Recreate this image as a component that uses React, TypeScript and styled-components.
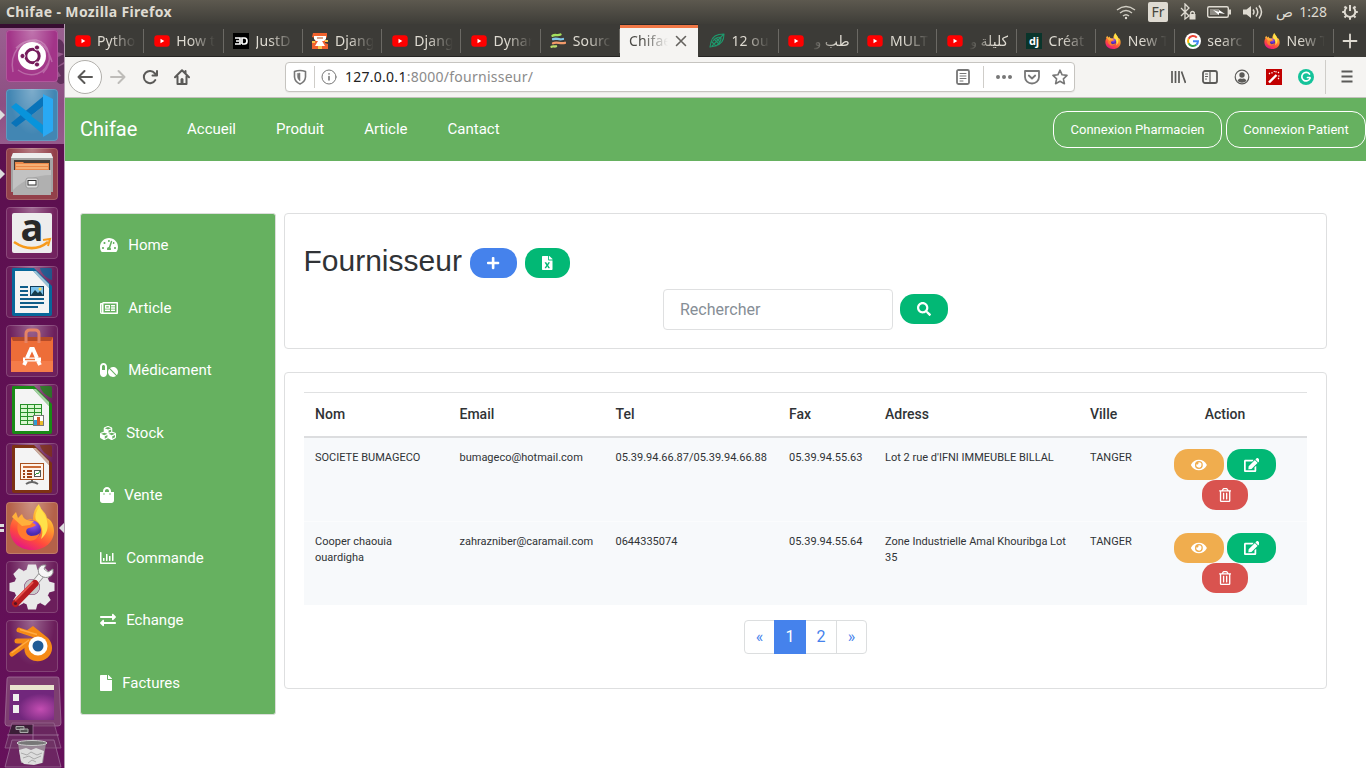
import React from 'react';
import styled, { createGlobalStyle, css } from 'styled-components';
import {
  FaTachometerAlt, FaRegNewspaper, FaPills, FaCubes, FaShoppingBag, FaRegChartBar, FaExchangeAlt,
  FaFile, FaPlus, FaFileExcel, FaSearch, FaEye, FaEdit, FaRegTrashAlt,
} from 'react-icons/fa';

const GlobalStyle = createGlobalStyle`
  * { box-sizing: border-box; }
  html, body { margin: 0; padding: 0; background: #fff; overflow: hidden; }
  svg { display: block; flex: none; }
`;

const ui = `'Noto Sans', 'DejaVu Sans', sans-serif`;
const roboto = `Roboto, sans-serif`;
const green = '#66b160';

const Screen = styled.div`
  width: 1366px; height: 768px; display: flex; flex-direction: column;
  overflow: hidden; font-family: ${roboto}; color: #303336;
`;
const TopPanel = styled.header`
  height: 24px; flex: none; display: flex; align-items: center; justify-content: space-between;
  padding: 0 8px 0 6px; background: linear-gradient(#5d594f, #3e3d38);
  color: #dfdbd2; font-family: ${ui};
`;
const WindowTitle = styled.div`font-size: 14px; font-weight: 700; letter-spacing: 0.35px; line-height: 22px;`;
const Indicators = styled.div`display: flex; align-items: center; height: 24px;`;
const Layout = styled.span<{ $ml: number }>`
  margin-left: ${p => p.$ml}px; width: 20px; height: 20px; border-radius: 2px; background: #dfdbd2;
  color: #45443d; font-size: 14px; line-height: 20px; text-align: center;
`;
const Slot = styled.span<{ $ml: number }>`display: flex; margin-left: ${p => p.$ml}px;`;
const Clock = styled.span`
  margin-left: 13px; width: 51px; display: flex; justify-content: space-between; font-size: 14px;
  line-height: 24px; letter-spacing: 0;
`;
const Desk = styled.div`display: flex; flex: 1; min-height: 0;`;

const Dock = styled.aside`
  position: relative; width: 65px; flex: none; padding: 6px 0 0 6px; display: flex; flex-direction: column; gap: 7px;
  border-right: 1px solid #b69fb3;
  background: linear-gradient(#370d31 0 4px, #9a6090 4px, #8d4f83 80px, #955b8c 120px, #5c104f 120px, #65105a 100%);
`;
const Tile = styled.div<{ $bg: string }>`
  position: relative; width: 52px; height: 52px; border-radius: 4px; flex: none;
  background: radial-gradient(ellipse at 50% 0, rgba(255,255,255,.32), rgba(255,255,255,0) 62%), ${p => p.$bg};
  box-shadow: inset 0 0 0 1px rgba(255,255,255,.17);
`;
const Pip = styled.span<{ $right?: boolean }>`
  position: absolute; top: 21px; border: 5px solid transparent;
  ${p => p.$right ? css`right: -6px; border-right-color: #ddd; border-left: 0;` : css`left: -6px; border-left-color: #ddd; border-right: 0;`}
`;
const DoublePip = styled.span`
  position: absolute; left: -6px; top: 22px; width: 4px; height: 8px;
  border-top: 3px solid #ddd; border-bottom: 3px solid #ddd;
`;
const Ghost = styled.svg`position: absolute; left: 54px; top: 14px;`;
const Stack = styled.svg`margin-left: -2px; margin-top: -4px;`;

const Browser = styled.div`flex: 1; min-width: 0; display: flex; flex-direction: column;`;
const Tabs = styled.div`
  height: 33px; flex: none; display: flex; background: #3c3b37; font-family: ${ui}; color: #dfdbd2;
`;
const TabBox = styled.div<{ $active?: boolean }>`
  position: relative; width: 79.3px; flex: none; display: flex; align-items: center; padding: 1px 0 0 9.5px; gap: 6.5px;
  border-bottom: 1px solid #252422; font-size: 14px;
  &::after { content: ''; position: absolute; right: 0; top: 5px; width: 1px; height: 24px; background: #6b6964; }
  ${p => p.$active && css`
    width: 78.3px; margin-right: 1px;
    background: #f5f4f2; color: #4a4945; border-bottom-color: #f5f4f2; box-shadow: inset 0 3px #f07746;
    padding-left: 9px; gap: 4.5px;
    border-top: 1px solid #2b2a28;
    &::after { display: none; }
  `}
`;
const TabText = styled.span<{ $rtl?: boolean }>`
  width: 39px; overflow: hidden; white-space: nowrap; line-height: 22px; letter-spacing: 0.1px;
  direction: ${p => p.$rtl ? 'rtl' : 'ltr'};
  mask-image: linear-gradient(${p => p.$rtl ? 'to left' : 'to right'}, #000 35%, transparent 100%);
`;
const NewTab = styled.div`flex: 1; display: flex; align-items: center; justify-content: center;`;

const Toolbar = styled.div`
  height: 41px; flex: none; display: flex; align-items: center; padding: 0 11px 1px 3px;
  background: #f5f4f2; border-bottom: 1px solid #c3c1bc;
`;
const Back = styled.div`
  width: 34px; height: 34px; border-radius: 50%; border: 1px solid #b1afab; background: #fff;
  display: flex; align-items: center; justify-content: center;
`;
const IconRow = styled.div<{ $ml: number }>`display: flex; gap: 16px; margin-left: ${p => p.$ml}px;`;
const UrlBar = styled.div`
  width: 790px; height: 30px; margin: 0 0 0 95px; flex: none; display: flex; align-items: center;
  border: 1px solid #c6c4c0; border-radius: 4px; background: #fff; padding: 0 6px; box-shadow: 0 1px 1px rgba(0,0,0,.05);
`;
const Divider = styled.i<{ $h: number; $ml: number; $mr: number }>`
  width: 1px; height: ${p => p.$h}px; background: #cfcdc9; margin: 0 ${p => p.$mr}px 0 ${p => p.$ml}px;
`;
const Url = styled.div`
  flex: 1; margin-left: 8px; padding-top: 1px; font-family: ${ui}; font-size: 14px; color: #8b8b8b; line-height: 24px; letter-spacing: 0.26px;
  b { font-weight: 400; color: #222; }
`;

const Page = styled.main`flex: 1; background: #fff; min-height: 0;`;
const Navbar = styled.nav`
  height: 63px; background: ${green}; display: flex; align-items: center; padding-left: 15px; color: #fff;
`;
const Brand = styled.span`font-size: 20px; width: 107px; padding-bottom: 2px;`;
const Links = styled.div`display: flex; gap: 40px; font-size: 15px; flex: 1; padding-bottom: 2px;`;
const Outline = styled.button<{ $w: number }>`
  width: ${p => p.$w}px; height: 37px; padding: 0; margin-left: 4px; border: 1px solid #fff; border-radius: 14px;
  background: transparent; color: #fff; font: 400 13px ${roboto}; white-space: nowrap;
`;
const Content = styled.div`display: flex; gap: 8px; padding: 52px 0 0 15px; align-items: flex-start;`;
const Side = styled.aside`
  width: 196px; height: 502px; border: 1px solid #dcdedb; border-radius: 3px; background: ${green};
  padding: 0 0 0 19.3px; color: #fff;
`;
const SideItem = styled.div`
  height: 62.5px; display: flex; align-items: center; gap: 9.9px; font-size: 15px; line-height: 20px;
`;
const Glyph = styled.span<{ $w: number; $s: number }>`
  display: flex;
  svg { width: ${p => p.$w}px; height: ${p => p.$s}px; }
`;
const Cards = styled.div`display: flex; flex-direction: column; gap: 23px;`;
const Card = styled.section<{ $h: number }>`
  width: 1043px; height: ${p => p.$h}px; border: 1px solid #dedfe0; border-radius: 4px; padding: 0 19px; background: #fff;
`;
const Heading = styled.div`display: flex; align-items: center; height: 45px; margin: 26px 0 0 -0.5px;`;
const Title = styled.h1`
  margin: 0 8px 0 0; padding-bottom: 4px; font: 400 30px/36px 'Liberation Sans', sans-serif; color: #303336;
`;
const Pill = styled.button<{ $w: number; $c: string; $ml?: number; $h?: number }>`
  width: ${p => p.$w}px; height: ${p => p.$h ?? 30}px; margin: 0 0 0 ${p => p.$ml ?? 0}px; padding: 0; border: 0;
  border-radius: 14px; background: ${p => p.$c}; color: #fff; display: flex; align-items: center; justify-content: center;
`;
const SearchRow = styled.div`
  display: flex; align-items: flex-start; justify-content: center; margin-top: 4px; gap: 7px;
  ${Pill} { margin-top: 5px; }
`;
const Input = styled.input`
  width: 230px; height: 41px; border: 1px solid #dfe0e1; border-radius: 4px; padding: 0 16px; background: #fff;
  font: 400 16px ${roboto}; outline: 0;
  &::placeholder { color: #868e96; opacity: 1; }
`;
const Table = styled.table`
  width: 1003px; margin-top: 19px; table-layout: fixed; border-collapse: separate; border-spacing: 0; text-align: left;
`;
const Th = styled.th`
  height: 46px; padding: 0 11px 2px; font-size: 14px; font-weight: 500; border-top: 1px solid #e0e1e2; border-bottom: 2px solid #dcdddf;
  &:last-child { text-align: center; }
`;
const Td = styled.td<{ $line?: boolean }>`
  height: ${p => p.$line ? 84 : 83}px; padding: 12px 11px 0; vertical-align: top; background: #f7f9fb; font-size: 11px; line-height: 16px;
  border-bottom: 1px solid ${p => p.$line ? '#fbfcfd' : '#f7f9fb'};
`;
const Actions = styled.div`
  display: flex; flex-wrap: wrap; justify-content: center; gap: 0 3px; width: 110px; margin: -1px auto 0;
`;
const Pager = styled.div`
  display: flex; width: 123px; height: 34px; margin: 15px auto 0; border: 1px solid #dcdedf; border-radius: 4px;
`;
const PageLink = styled.span<{ $on?: boolean }>`
  flex: 0 0 30px; height: 32px; text-align: center; font-size: 16px; line-height: 32px; color: #4582ec;
  &:first-child { flex-basis: 29px; }
  &:last-child { border-left: 1px solid #dcdedf; }
  ${p => p.$on && css`background: #4582ec; color: #fff; flex-basis: 32px; height: 34px; margin-top: -1px; line-height: 34px;`}
`;

const Ico = ({ children, c = '#5b5a58', s = 16 }: { children: React.ReactNode; c?: string; s?: number }) => (
  <svg width={s} height={s} viewBox="0 0 16 16" fill="none" stroke={c} strokeWidth="2" strokeLinecap="round" strokeLinejoin="round">{children}</svg>
);

const YouTube = () => <svg width="16" height="16" viewBox="0 0 16 16"><rect x=".3" y="2.3" width="15.4" height="11.4" rx="3" fill="#f00" /><path d="M6.5 5.8v4.4L10.3 8z" fill="#fff" /></svg>;
const FoxMark = ({ size = 16 }: { size?: number }) => (
  <svg width={size} height={size} viewBox="0 0 46 46">
    <defs>
      <linearGradient id="foxBody" x1=".8" y1="0" x2=".3" y2="1"><stop stopColor="#fff044" /><stop offset=".4" stopColor="#ff9a2d" /><stop offset=".72" stopColor="#ff4a3d" /><stop offset="1" stopColor="#e31587" /></linearGradient>
      <radialGradient id="foxCore" cx=".6" cy=".2"><stop stopColor="#a05bff" /><stop offset="1" stopColor="#4b2bb0" /></radialGradient>
    </defs>
    <path d="M30 0c1 6 7 8 8 14 5 2 7 8 7 13 0 11-9 19-22 19S1 37 1 26c0-6 2-10 5-14l2 5 4-6c1 3 2 4 5 5 4-1 6-1 7 0 0-7 2-12 6-16z" fill="url(#foxBody)" />
    <path d="M31 2c1 6 6 8 7 15 2 8-1 14-6 18 3-8 1-14-5-19-2-5 1-10 4-14z" fill="#ffe14a" />
    <circle cx="22" cy="26" r="10" fill="url(#foxCore)" />
    <path d="M9 19c5-3 9-3 15 0l3 2c-3 3-7 2-9 4-2 3 0 6 4 7 4 0 7-1 9-3-2 7-8 9-14 7-7-2-10-9-8-17z" fill="#ff7a2e" />
    <path d="M3 13c1-2 3-4 4-5l2 6 4-4c1 3 2 5 5 6l7 1-4 4-8 1z" fill="#ffb03c" />
  </svg>
);
const FaviconBox = styled.span<{ $bg: string; $size: number }>`
  width: 16px; height: 16px; flex: none; background: ${p => p.$bg}; color: #fff; text-align: center;
  font: 700 ${p => p.$size}px/15px 'Open Sans', sans-serif;
`;
const JustDjango = () => (
  <svg width="16" height="16" viewBox="0 0 16 16"><path d="M0 0h16v16H0z" /><path d="M2 5h5v6H2M3 8h3M9 11V5h2.500q2.500 0 2.500 3t-2.500 3H9" fill="none" stroke="#fff" strokeWidth="1.700" /></svg>
);
const Robot = () => (
  <svg width="16" height="16" viewBox="0 0 16 16"><path d="M1 0h14v4l-2 2v4l3 1v5H0v-6l3-1V5L0 4z" fill="#f1622d" /><path d="M2 3h12v3l-2 2H4L2 6zM6 8h4l3 5H3z" fill="#fff" /><path d="M5 4h6v2H5z" fill="#d9a58e" /><path d="M0 8h3v2H0zM13 7h3v2h-3zM6 13h4v3H6z" fill="#f9c64b" /></svg>
);
const Waves = () => (
  <svg width="16" height="16" viewBox="0 0 16 16" fill="none" strokeWidth="2.300" strokeLinecap="round"><path d="M2.500 2.800c3-2 5 .5 8-1.300" stroke="#a5e05e" /><path d="M3 6.200c4-1.500 5 1 10-.2" stroke="#82c7e8" /><path d="M3 10.200c4-2 7 1 12-.4" stroke="#f39a6a" /><path d="M1.500 13.700c2-1 3 .3 4.500-.4" stroke="#b9dc6a" /></svg>
);
const Rocket = () => <Ico c="#1e9a6d"><path strokeWidth="1.1" d="M15 1C8 1 3 4 2 9l-1 5 5-1c5-1 9-5 9-12zM3 13L14 2M4 8c2-3 5-4 8-4M8 12c3-2 4-4 4-7M5 6l5 5M7 5l4 4M3 9l4 4" /></Ico>;
const Google = () => (
  <svg width="16" height="16" viewBox="0 0 16 16" fill="none" strokeWidth="2"><circle cx="8" cy="8" r="8" fill="#fff" /><path d="M11.800 4.600A5 5 0 003.600 5.700" stroke="#ea4335" /><path d="M3.600 5.700a5 5 0 000 4.600" stroke="#fbbc05" /><path d="M3.600 10.300a5 5 0 007.700 1.500" stroke="#34a853" /><path d="M11.300 11.800a5 5 0 001.700-3.600H8" stroke="#4285f4" /></svg>
);

type TabInfo = { icon?: React.ReactNode; text: string; active?: boolean; rtl?: boolean };
const tabs: TabInfo[] = [
  { icon: <YouTube />, text: 'Pytho' },
  { icon: <YouTube />, text: 'How t' },
  { icon: <JustDjango />, text: 'JustD' },
  { icon: <Robot />, text: 'Djang' },
  { icon: <YouTube />, text: 'Djang' },
  { icon: <YouTube />, text: 'Dynar' },
  { icon: <Waves />, text: 'Sourc' },
  { text: 'Chifae', active: true },
  { icon: <Rocket />, text: '12 ou' },
  { icon: <YouTube />, text: 'طب و', rtl: true },
  { icon: <YouTube />, text: 'MULT' },
  { icon: <YouTube />, text: 'كليلة و', rtl: true },
  { icon: <FaviconBox $bg="#09352b" $size={11}>dj</FaviconBox>, text: 'Créat' },
  { icon: <FoxMark />, text: 'New T' },
  { icon: <Google />, text: 'searc' },
  { icon: <FoxMark />, text: 'New T' },
];

const tile = { width: 52, height: 52, viewBox: '0 0 52 52' };
const DocTile = ({ c, children }: { c: string; children: React.ReactNode }) => (
  <svg {...tile}>
    <path d="M7 2h21l18 18v28q0 2-2 2H8q-2 0-2-2V4q0-2 1-2z" fill={c} />
    <path d="M9 5h18l16 17v25H9z" fill="#f4f4f4" /><path d="M27 5l16 17v-4L30 5z" fill="#fff" opacity=".6" />
    <path d="M34 2h10q2 0 2 2v10c-4-1-11-6-12-12z" fill={c} opacity=".75" />{children}
  </svg>
);
const Teeth = () => (
  <g fill="#e9e9e9">{[0, 45, 90, 135, 180, 225, 270, 315].map(a => <path key={a} d="M20.500 9l1.500-5.500h8L31.500 9z" transform={`rotate(${a} 26 26)`} />)}</g>
);
const dock: { bg: string; art: React.ReactNode; marks?: React.ReactNode }[] = [
  { bg: '#a23488', art: <svg {...tile}>
    <g fill="none" stroke="#fff" opacity=".26"><path d="M7 42C3 22 16 9 30 10c14 3 18 22 7 33M10 18c12-12 30-9 36 14M44 28C40 45 25 49 12 40" strokeWidth="1.500" /></g>
    <circle cx="26" cy="26" r="14" fill="#fff" /><circle cx="26.500" cy="26" r="6.700" fill="none" stroke="#751b5b" strokeWidth="3" />
    <g fill="#751b5b" stroke="#fff" strokeWidth="1"><circle cx="16.500" cy="26" r="2.600" /><circle cx="31" cy="17.500" r="2.600" /><circle cx="31" cy="34.500" r="2.600" /></g></svg> },
  { bg: '#4286b3', marks: <Pip />, art: <svg {...tile}>
    <path d="M5 34l5 4 29-22V6z" fill="#0873b9" /><path d="M5 18l5-4 29 22v11z" fill="#0894db" /><path d="M37 5l10 5v32l-10 6z" fill="#29a9f4" /><path d="M37 17L25 27l12 9z" fill="#4286b3" /></svg> },
  { bg: '#93404a', marks: <Pip />, art: <svg {...tile}>
    <path d="M7 5h38l2 5v34H5V10z" fill="#a5a5a5" /><path d="M7 5h38l2 5H5z" fill="#eee" /><path d="M8 12h36v10H8z" fill="#433c36" /><path d="M9 14h8l1 1h25v9H9z" fill="#eb8849" /><path d="M10 17h32M10 20h32" stroke="#ffd7a0" />
    <path d="M7 22h38v25H7z" fill="#b0b0b0" /><path d="M7 22h38v5C30 27 17 32 7 42z" fill="#c2c2c2" /><rect x="20" y="30" width="12" height="10" rx="2" fill="#ddd" stroke="#999" /><rect x="22" y="32.500" width="8" height="4.500" fill="#fff" stroke="#333" /></svg> },
  { bg: '#72235f', art: <svg {...tile}><rect x="6" y="6" width="40" height="40" rx="2" fill="#ededed" />
    <text x="26" y="33.500" textAnchor="middle" fontFamily="Open Sans" fontWeight="700" fontSize="38" fill="#292929">a</text>
    <path d="M8 35c12 8 24 8 34 0" fill="none" stroke="#f79a1c" strokeWidth="2.600" /><path d="M37 33l7-1-2 7" fill="none" stroke="#f79a1c" strokeWidth="2" /></svg> },
  { bg: '#6b1e5b', art: <DocTile c="#08679a"><g stroke="#105d89" strokeWidth="2"><path d="M14 21h8M14 25h8M14 29h8M14 33h24M14 37h24M14 41h18" /></g><rect x="24.500" y="20.500" width="13" height="9" fill="#7cc3ec" stroke="#123e5c" /><path d="M25 29l4-5 3 3 2-2 3 4z" fill="#153c4a" /><circle cx="34" cy="23" r="1.500" fill="#ffd94a" /></DocTile> },
  { bg: '#6d205d', art: <svg {...tile}><path d="M5 12h42v35H5z" fill="#ed6d38" /><path d="M5 12h42l-2 4H7z" fill="#b54b28" /><path d="M5 36h42v11H5z" fill="#f57c49" /><path d="M20 18V9q0-4 4-4h5q4 0 4 4v9" fill="none" stroke="#e68465" strokeWidth="3" />
    <path d="M21 33l4-9h2l4 9M18 40l2-4M34 40l-2-4" fill="none" stroke="#fff" strokeWidth="3.800" /><path d="M17 34.500h18" stroke="#fff" strokeWidth="4" /><path d="M19 34.500h10" stroke="#ee7840" strokeWidth="1.500" /></svg> },
  { bg: '#6b1e5b', art: <DocTile c="#198a16"><rect x="14" y="20" width="22" height="21" fill="#27902a" /><g fill="#d8f7cf">{[0, 1, 2, 3, 4].map(r => [0, 1, 2].map(c => <rect key={`${r}${c}`} x={15 + c * 7} y={21 + r * 4} width="6" height="3" />))}</g><rect x="27.500" y="31.500" width="10" height="10" fill="#fff" stroke="#777" /><path d="M28 36h3v5h-3z" fill="#2e9bd5" /><path d="M31 33h3v8h-3z" fill="#d35b2c" /><path d="M34 37h3v4h-3z" fill="#e9bd2b" /></DocTile> },
  { bg: '#6b1e5b', art: <DocTile c="#7d3213"><rect x="14.500" y="20.500" width="23" height="16" fill="#fff3e9" stroke="#a8501e" /><path d="M17 24h18" stroke="#c96b38" strokeWidth="2" /><g stroke="#9c4114" strokeWidth="2"><path d="M17 28h2M21 28h5M17 31h2M21 31h5M17 34h2M21 34h5" /></g><rect x="28.500" y="27.500" width="6" height="6" fill="#fff" stroke="#555" /><path d="M29 32l2-2 1 1 2-3" stroke="#2a9632" fill="none" /><path d="M26 37v3M20 41q6-4 12 0" stroke="#666" strokeWidth="2" fill="none" /></DocTile> },
  { bg: '#b46149', marks: <><DoublePip /><Pip $right /></>, art: <svg {...tile}><g transform="translate(3 2)"><FoxMark size={46} /></g></svg> },
  { bg: '#6b1e5b', art: <svg {...tile}><Teeth /><circle cx="26" cy="26" r="13" fill="none" stroke="#e9e9e9" strokeWidth="10" /><circle cx="26" cy="26" r="7.500" fill="#c9c9c9" />
    <path d="M28 23l9-11" stroke="#8f8f8f" strokeWidth="6.500" /><path d="M28 23l9-11" stroke="#f2f2f2" strokeWidth="5" />
    <path d="M37 4c-5 1-6 7-3 10 4 4 11 3 13-2V8l-5 3-4-3 2-4z" fill="#f6f6f6" stroke="#8f8f8f" />
    <path d="M9.500 42.500L29 22.500" stroke="#b81c20" strokeWidth="7" strokeLinecap="round" /><path d="M9 39.500L27 21" stroke="#e5564f" strokeWidth="2" /><circle cx="9.500" cy="42.500" r="1.600" fill="#571322" /></svg> },
  { bg: '#6b1e5b', art: <svg {...tile}><path d="M13 10L31 16M6 34l18-13M11 21h18" stroke="#f58a16" strokeWidth="5" strokeLinecap="round" /><path d="M27 6l15 12c12 14-5 29-18 21-9-6-6-17 1-20l3-2-8-6z" fill="#f58a16" /><path d="M14 9.500l17 5M5.500 33L23 20" stroke="#ffac45" strokeWidth="1.500" /><circle cx="32" cy="26" r="9.500" fill="#fff" /><circle cx="32" cy="26" r="5.500" fill="#205b96" /></svg> },
];

const WifiIcon = () => <svg width="20" height="16" viewBox="0 0 20 16" fill="none" stroke="#dfdbd2" strokeWidth="1.4"><path d="M1 6q9-7 18 0M4 9q6-5 12 0M7 12q3-2.600 6 0" opacity=".9" /><circle cx="10" cy="14" r="1.200" fill="#dfdbd2" stroke="none" /></svg>;
const BtIcon = () => <svg width="16" height="18" viewBox="0 0 16 18" fill="none" stroke="#dfdbd2" strokeWidth="1.300"><path d="M1 5l8 8-4 3V1l4 4-8 8" /><rect x="9.500" y="11" width="6" height="5.500" fill="#dfdbd2" stroke="none" /><path d="M10.700 11V9.500q1.800-2 3.600 0V11" /></svg>;
const BatteryIcon = () => <svg width="24" height="14" viewBox="0 0 24 14"><rect x=".7" y="1.700" width="20.600" height="10.600" rx="1.500" fill="none" stroke="#dfdbd2" strokeWidth="1.400" /><path d="M22 4.500h2v5h-2z" fill="#dfdbd2" /><rect x="3" y="4" width="9" height="6" fill="#8e8b84" /><path d="M6 5l6 2V5l6 4-6-1v2z" fill="#fff" /></svg>;
const VolumeIcon = () => <svg width="20" height="16" viewBox="0 0 20 16"><path d="M0 5.500h3.500L8 2v12l-4.500-3.500H0z" fill="#dfdbd2" /><g fill="none" stroke="#dfdbd2" strokeWidth="1.500"><path d="M10 5.500q2 2.500 0 5M13 3.500q3.500 4.500 0 9M16 1.500q5 6.500 0 13" /></g></svg>;
const PowerGear = () => (
  <svg width="16" height="18" viewBox="0 0 16 18" fill="none" stroke="#dfdbd2" strokeWidth="2">
    <path d="M5 4.300a5.300 5.300 0 106 0M8 2v6" />
    {[45, 90, 135, 180, 225, 270, 315].map(a => <path key={a} d="M8 1.200v2.500" transform={`rotate(${a} 8 9)`} />)}
  </svg>
);

const nav = [
  { i: <FaTachometerAlt />, t: 'Home', w: 18 }, { i: <FaRegNewspaper />, t: 'Article', w: 18 }, { i: <FaPills />, t: 'Médicament', w: 18 },
  { i: <FaCubes />, t: 'Stock', w: 16 }, { i: <FaShoppingBag />, t: 'Vente', w: 14 }, { i: <FaRegChartBar />, t: 'Commande', w: 16 },
  { i: <FaExchangeAlt />, t: 'Echange', w: 16 }, { i: <FaFile />, t: 'Factures', w: 12 },
];
const widths = [144.5, 156, 173.5, 96, 205, 64, 164];
const rows = [
  ['SOCIETE BUMAGECO', 'bumageco@hotmail.com', '05.39.94.66.87/05.39.94.66.88', '05.39.94.55.63', "Lot 2 rue d'IFNI IMMEUBLE BILLAL", 'TANGER'],
  ['Cooper chaouia ouardigha', 'zahrazniber@caramail.com', '0644335074', '05.39.94.55.64', 'Zone Industrielle Amal Khouribga Lot 35', 'TANGER'],
];

export default function App() {
  return (
    <Screen>
      <GlobalStyle />
      <TopPanel>
        <WindowTitle>Chifae - Mozilla Firefox</WindowTitle>
        <Indicators>
          <WifiIcon /><Layout $ml={12}>Fr</Layout>
          <Slot $ml={12}><BtIcon /></Slot><Slot $ml={11}><BatteryIcon /></Slot><Slot $ml={12}><VolumeIcon /></Slot>
          <Clock><span>ص</span><span>1:28</span></Clock><Slot $ml={15}><PowerGear /></Slot>
        </Indicators>
      </TopPanel>
      <Desk>
        <Dock>
          <Ghost width="10" height="50" viewBox="0 0 10 50" fill="#60305c"><path d="M2 2c4-2 7 1 8 5v9L3 14zM4 19l6-3v8l-6 4zM2 30l8-4v19c-4 3-8-1-8-5l5-2z" /></Ghost>
          {dock.map((d, i) => <Tile key={i} $bg={d.bg}>{d.art}{d.marks}</Tile>)}
          <Stack width="60" height="93" viewBox="0 0 60 93">
            <defs><radialGradient id="desk" cx=".7" cy=".65"><stop stopColor="#c34db2" /><stop offset="1" stopColor="#71277c" /></radialGradient></defs>
            <path d="M5 2h48q2 0 2 2l2 44q0 3-3 3H4q-3 0-3-3L3 4q0-2 2-2z" fill="#7d3f70" stroke="#a878a0" strokeOpacity=".7" /><path d="M6 14h44v31H5z" fill="url(#desk)" /><path d="M6 10h44v5H6z" fill="#e9e5cf" />
            <path d="M9 19h6v7H9zM9 30h6v8H9z" fill="#eee" />
            <path d="M8 48h42l7 25H1z" fill="rgba(110,60,100,.5)" stroke="#9a6a93" strokeOpacity=".7" /><path d="M8 50h21v9H5z" fill="#3b1d37" /><path d="M12 51.500h8v3h-8zM16 54h8v3.500h-8z" fill="#555" stroke="#aaa" />
            <path d="M29 49v22M3 60h52" stroke="#a984a5" strokeOpacity=".7" />
            <path d="M8 65h42l7 27H1z" fill="rgba(120,70,110,.4)" stroke="#a378a0" strokeOpacity=".7" />
            <path d="M14 68h28l-3 20H17z" fill="#a29ca1" opacity=".8" /><ellipse cx="28" cy="68" rx="15" ry="2.500" fill="#777" stroke="#ccc" />
            <path d="M15 75l7-2 5 2 5-2 8 3-2 12-8 2-10-1-3-3z" fill="#ddd" /><path d="M17 78l6 2 4-3 6 3 5-2M19 83l6-2 5 3 7-3M24 88l4-3 4 2" fill="none" stroke="#aaa" />
          </Stack>
        </Dock>
        <Browser>
          <Tabs>
            {tabs.map((t, i) => (
              <TabBox key={i} $active={t.active}>
                {t.icon}<TabText $rtl={t.rtl}>{t.text}</TabText>
                {t.active && <Ico c="#65635f"><path d="M3.500 3.500l9 9M12.500 3.500l-9 9" strokeWidth="1.600" /></Ico>}
              </TabBox>
            ))}
            <NewTab><Ico c="#dfdbd2"><path d="M8 1.500v13M1.500 8h13" strokeWidth="1.800" /></Ico></NewTab>
          </Tabs>
          <Toolbar>
            <Back><Ico><path d="M15 8H1.500M7.500 2l-6 6 6 6" /></Ico></Back>
            <IconRow $ml={8}>
              <Ico c="#bebcb9"><path d="M1 8h13.500M8.500 2l6 6-6 6" /></Ico>
              <Ico><path d="M13.300 11A6.100 6.100 0 1112.800 4.300l1.700 1.700M15 2v4.500h-4.500" /></Ico>
              <Ico><path d="M1 8.200l7-7 7 7M3.500 7.500V15h9V7.500M11.500 2v2" /><path d="M8 14v-3.500" strokeWidth="3" /></Ico>
            </IconRow>
            <UrlBar>
              <Ico c="#777"><path d="M2.500 2.500Q8 .5 13.500 2.500V8q-.5 5-5.500 7-5-2-5.500-7z" strokeWidth="1.600" /><path d="M5.500 4.500L8 4v8q-2.500-2-2.500-4z" fill="#777" strokeWidth=".5" /></Ico>
              <Divider $h={22} $ml={6} $mr={6} />
              <Ico c="#777"><circle cx="8" cy="8" r="7" strokeWidth="1" /><path d="M8 7.500V11M8 4.800v.1" strokeWidth="1.600" /></Ico>
              <Url><b>127.0.0.1</b>:8000/fournisseur/</Url>
              <Ico c="#777"><rect x="2" y="1" width="12" height="14" rx="1.500" strokeWidth="1.800" /><path d="M5 4.500h6M5 7h6M5 9.500h6M5 12h3" strokeWidth="1" /></Ico>
              <Divider $h={22} $ml={12} $mr={12} />
              <Ico c="#777"><path d="M2 8h.01M8 8h.01M14 8h.01" strokeWidth="4" /></Ico>
              <IconRow $ml={12}>
                <Ico c="#777"><path d="M1 2h14v6a7 6.500 0 01-14 0zM4.800 6.500L8 9.500l3.200-3" strokeWidth="1.800" /></Ico>
              </IconRow>
              <IconRow $ml={12}>
                <Ico c="#777"><path d="M8 1.200l2.100 4.600 4.900.6-3.600 3.400 1 4.900L8 12.300l-4.400 2.400 1-4.900L1 6.400l4.900-.6z" strokeWidth="1.600" /></Ico>
              </IconRow>
            </UrlBar>
            <IconRow $ml={95}>
              <Ico><path d="M2 2v12M5.500 2v12M9 2v12M11.500 2.500l4 11.500" strokeWidth="1.700" strokeLinecap="butt" /></Ico>
              <Ico><rect x="1" y="2" width="14" height="12" rx="2" strokeWidth="1.800" /><path d="M8 2v12M3.500 5h2M3.500 7.500h2M3.500 10h1" strokeWidth="1.200" /></Ico>
              <Ico><circle cx="8" cy="8" r="6.800" strokeWidth="1.200" /><circle cx="8" cy="6" r="2.700" fill="#5b5a58" strokeWidth="0" /><path d="M3.500 12q1-3 3-2.500 1.500.7 3 0 2-.5 3 2.500-4.500 3.500-9 0z" fill="#5b5a58" strokeWidth="0" /></Ico>
              <svg width="16" height="16" viewBox="0 0 16 16"><path d="M0 0h16v16H0z" fill="#c20000" /><path d="M3 13.500l7.500-7.500" stroke="#fff" strokeWidth="2.400" /><path d="M3 4l1 1M6 3v1.500M10 2v1.500M13 3l-1 1M13.500 7H12M13 10l-1-1M8 2l.5 1" stroke="#fff" strokeWidth="1.100" /></svg>
              <Ico><circle cx="8" cy="8" r="8" fill="#15c39a" stroke="none" /><path d="M11.500 5A4.300 4.300 0 1012 9.500V8.500H9.500" stroke="#fff" strokeWidth="1.700" /></Ico>
            </IconRow>
            <Divider $h={34} $ml={11} $mr={13} />
            <Ico><path d="M2.500 2.500h11M2.500 7.500h11M2.500 12.500h11" strokeWidth="1.800" strokeLinecap="butt" /></Ico>
          </Toolbar>
          <Page>
            <Navbar>
              <Brand>Chifae</Brand>
              <Links><span>Accueil</span><span>Produit</span><span>Article</span><span>Cantact</span></Links>
              <Outline $w={169}>Connexion Pharmacien</Outline><Outline $w={140}>Connexion Patient</Outline>
            </Navbar>
            <Content>
              <Side>{nav.map(n => <SideItem key={n.t}><Glyph $w={n.w} $s={16}>{n.i}</Glyph>{n.t}</SideItem>)}</Side>
              <Cards>
                <Card $h={136}>
                  <Heading>
                    <Title>Fournisseur</Title>
                    <Pill $w={47} $c="#4582ec"><Glyph $w={12.25} $s={14}><FaPlus /></Glyph></Pill>
                    <Pill $w={45} $c="#02b875" $ml={8}><Glyph $w={10.5} $s={14}><FaFileExcel /></Glyph></Pill>
                  </Heading>
                  <SearchRow>
                    <Input placeholder="Rechercher" />
                    <Pill $w={48} $c="#02b875"><Glyph $w={14} $s={14}><FaSearch /></Glyph></Pill>
                  </SearchRow>
                </Card>
                <Card $h={317}>
                  <Table>
                    <colgroup>{widths.map((w, i) => <col key={i} style={{ width: w }} />)}</colgroup>
                    <thead><tr>{['Nom', 'Email', 'Tel', 'Fax', 'Adress', 'Ville', 'Action'].map(h => <Th key={h}>{h}</Th>)}</tr></thead>
                    <tbody>
                      {rows.map((r, i) => (
                        <tr key={i}>
                          {r.map((c, j) => <Td key={j} $line={i === 0}>{c}</Td>)}
                          <Td $line={i === 0}>
                            <Actions>
                              <Pill $w={50} $h={i === 0 ? 31 : 30} $c="#f0ad4e"><Glyph $w={15.75} $s={14}><FaEye /></Glyph></Pill>
                              <Pill $w={49} $h={i === 0 ? 31 : 30} $c="#02b875"><Glyph $w={15.75} $s={14}><FaEdit /></Glyph></Pill>
                              <Pill $w={46} $c="#d9534f"><Glyph $w={12.25} $s={14}><FaRegTrashAlt /></Glyph></Pill>
                            </Actions>
                          </Td>
                        </tr>
                      ))}
                    </tbody>
                  </Table>
                  <Pager><PageLink>«</PageLink><PageLink $on>1</PageLink><PageLink>2</PageLink><PageLink>»</PageLink></Pager>
                </Card>
              </Cards>
            </Content>
          </Page>
        </Browser>
      </Desk>
    </Screen>
  );
}
